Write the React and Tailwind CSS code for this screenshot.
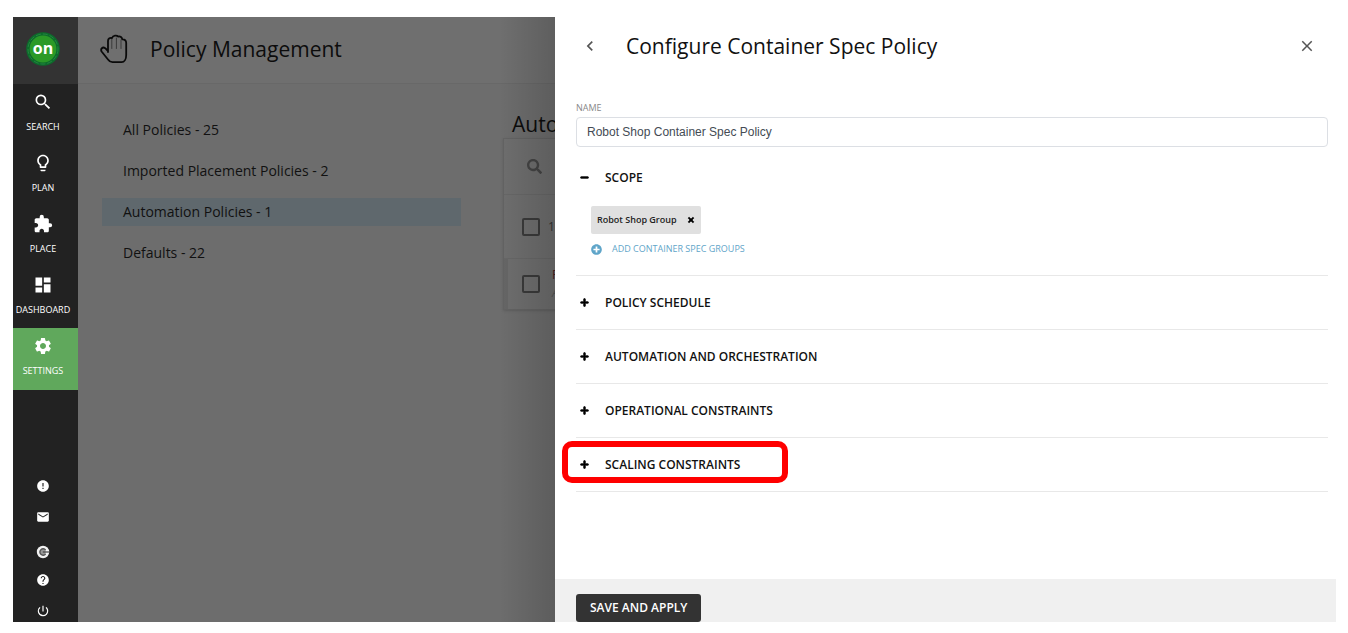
import { useState } from "react";
import { FaMinus, FaPlus, FaPlusCircle, FaSearch, FaTimes } from "react-icons/fa";
import {
  MdChevronLeft,
  MdClose,
  MdDashboard,
  MdEmail,
  MdError,
  MdExtension,
  MdHelp,
  MdLightbulbOutline,
  MdPowerSettingsNew,
  MdSearch,
  MdSettings,
} from "react-icons/md";

const navItems = [
  { label: "SEARCH", Icon: MdSearch },
  { label: "PLAN", Icon: MdLightbulbOutline },
  { label: "PLACE", Icon: MdExtension },
  { label: "DASHBOARD", Icon: MdDashboard },
  { label: "SETTINGS", Icon: MdSettings, active: true },
];

const categories = [
  { label: "All Policies - 25" },
  { label: "Imported Placement Policies - 2" },
  { label: "Automation Policies - 1", active: true },
  { label: "Defaults - 22" },
];

function Logo() {
  return (
    <svg viewBox="0 0 34 34" className="size-[34px]" role="img" aria-label="on">
      <circle cx="17" cy="17" r="16.8" fill="#0d6b2b" />
      <circle cx="17" cy="17" r="15" fill="none" stroke="#2a8a45" strokeWidth="0.8" strokeDasharray="5 2" />
      <circle cx="17" cy="17" r="13.4" fill="#2b9a27" />
      <text x="17" y="21.5" textAnchor="middle" fontSize="16" fontWeight="700" fill="#fff" fontFamily="Open Sans, sans-serif">
        on
      </text>
    </svg>
  );
}

function HandIcon() {
  return (
    <svg viewBox="0 0 28 30" className="h-[30px] w-7" fill="none" stroke="#0a0a0a" strokeWidth="1.8" strokeLinecap="round" strokeLinejoin="round" aria-hidden="true">
      <path d="M11.8 5V14.5M16.4 4V14.5M21 6V14.5" stroke="#3a3a3a" strokeWidth="1" />
      <path d="M8 18V7C8 4.5 9.5 3.6 12 4C13 1.2 17 1 18 2.6C20.5 2 22 3.4 22.3 5.4C24.8 5.2 26.2 6.6 26.2 9V21C26.2 25 24.5 28.2 21.5 28.2H12.5C10 28.2 9 27 8 25.5L1.6 17.5C.2 15 2.6 12.4 5.2 14.2L8 17" />
    </svg>
  );
}

function GlobeG() {
  return (
    <svg viewBox="0 0 14 14" className="size-3.5" aria-hidden="true">
      <circle cx="7" cy="7" r="6.2" fill="#f2f2f2" />
      <path d="M9.6 5A3.2 3.2 0 1 0 9.6 9" fill="#999" stroke="#555" strokeWidth="1.4" />
      <path d="M6.8 7H13.4" stroke="#444" strokeWidth="1.2" />
    </svg>
  );
}

function NavBar() {
  return (
    <nav className="flex w-[65px] shrink-0 flex-col bg-[#222] text-white">
      <a href="#home" className="flex h-[67px] shrink-0 items-center justify-center bg-[#333] pr-[5px] pb-[3px]">
        <Logo />
      </a>
      {navItems.map(({ label, Icon, active }) => (
        <a
          key={label}
          href={"#" + label.toLowerCase()}
          className={
            active
              ? "flex h-[62px] shrink-0 flex-col items-center gap-2 bg-[#60a85c] pt-2 pr-[5px]"
              : "flex h-[61px] shrink-0 flex-col items-center gap-2 pt-2 pr-[5px]"
          }
        >
          <Icon className="size-5" />
          <span className="text-[9px] leading-[14px]">{label}</span>
        </a>
      ))}
      <div className="mt-auto flex flex-col items-center gap-[21px] pr-[5px] pb-1">
        <div className="flex flex-col gap-[17px]">
          <button type="button" aria-label="Alerts"><MdError className="size-3.5" /></button>
          <button type="button" aria-label="Messages"><MdEmail className="size-3.5" /></button>
        </div>
        <div className="flex flex-col gap-[17px]">
          <div className="flex flex-col gap-3.5">
            <button type="button" aria-label="Community"><GlobeG /></button>
            <button type="button" aria-label="Help"><MdHelp className="size-3.5" /></button>
          </div>
          <button type="button" aria-label="Log out"><MdPowerSettingsNew className="size-3.5" /></button>
        </div>
      </div>
    </nav>
  );
}

function Checkbox({ label }) {
  return (
    <input
      type="checkbox"
      aria-label={label}
      className="size-[18px] shrink-0 appearance-none rounded-xs border-2 border-[#3a3a3a]"
    />
  );
}

function PolicyPage() {
  return (
    <main className="relative w-[477px] shrink-0 overflow-hidden bg-[#6d6d6d]">
      <header className="flex h-[67px] items-center gap-[22px] border-b border-[#686868] bg-[#6f6f6f] pb-0.5 pl-[22px]">
        <HandIcon />
        <h1 className="text-[21px] leading-7 text-[#0c0c0c]">Policy Management</h1>
      </header>
      <div className="flex">
        <ul className="ml-6 mt-8 flex w-[359px] shrink-0 flex-col gap-[13px]">
          {categories.map(({ label, active }) => (
            <li key={label}>
              <a
                href="#policies"
                className={
                  active
                    ? "flex h-7 items-center bg-[#5f686d] pl-[21px] text-sm text-[#111]"
                    : "flex h-7 items-center pl-[21px] text-sm text-[#111]"
                }
              >
                {label}
              </a>
            </li>
          ))}
        </ul>
        <section className="ml-[42px] mt-[26px] w-[600px] shrink-0">
          <h2 className="pl-[9px] text-[21px] leading-7 text-[#0c0c0c]">Automation</h2>
          <div className="border border-[#636363] bg-[#6e6e6e] shadow">
            <div className="flex h-14 items-center border-b border-[#676767] pl-[23px]">
              <FaSearch className="size-[15px] text-[#444]" />
            </div>
            <div className="flex h-16 items-center gap-2 border-b border-[#676767] pl-[18px] text-xs text-[#333]">
              <Checkbox label="Select all" />
              <span>1</span>
            </div>
            <div className="flex h-[50px] items-center gap-3 border-l-4 border-[#666] pl-[14px]">
              <Checkbox label="Select policy" />
              <div className="text-xs leading-[18px]">
                <p className="text-[#4a2020]">R</p>
                <p className="italic text-[#555]">A</p>
              </div>
            </div>
          </div>
        </section>
      </div>
      <div className="pointer-events-none absolute inset-y-0 right-0 w-14 bg-linear-to-r from-transparent to-black/15" />
    </main>
  );
}

function Section({ title, open, onToggle, highlighted, children }) {
  const Icon = open ? FaMinus : FaPlus;
  return (
    <section className="relative border-b border-[#e8e8e8]">
      <button type="button" onClick={onToggle} aria-expanded={open} className="flex h-[53px] w-full items-center gap-4 pl-1 text-left">
        <Icon className="size-[9px] stroke-black stroke-[40px] text-black" />
        <span className="text-[12px] font-semibold text-[#111]">{title}</span>
      </button>
      {open && children}
      {highlighted && (
        <div className="pointer-events-none absolute -left-3.5 top-[3px] h-[42px] w-[226px] rounded-[10px] border-6 border-[#ff0000]" />
      )}
    </section>
  );
}

function Drawer() {
  const [name, setName] = useState("Robot Shop Container Spec Policy");
  const [open, setOpen] = useState("SCOPE");
  const toggle = (title) => setOpen(open === title ? "" : title);
  return (
    <aside className="flex min-w-0 flex-1 flex-col bg-white">
      <header className="flex h-[58px] shrink-0 items-center pl-[25px] pr-5">
        <button type="button" aria-label="Back" className="text-[#555]">
          <MdChevronLeft className="size-5" />
        </button>
        <h2 className="ml-[26px] flex-1 text-[21px] leading-7 text-[#111]">Configure Container Spec Policy</h2>
        <button type="button" aria-label="Close" className="text-[#555]">
          <MdClose className="size-[18px]" />
        </button>
      </header>
      <div className="flex-1 pl-[21px] pr-2 pt-[26px]">
        <label htmlFor="policy-name" className="block text-[9px] leading-[14px] text-[#888]">NAME</label>
        <input
          id="policy-name"
          value={name}
          onChange={(event) => setName(event.target.value)}
          className="mt-0.5 mb-1 block h-[30px] w-full rounded-sm border border-[#dcdfe4] px-2.5 font-['Liberation_Sans',sans-serif] text-[12px] text-[#444b54]"
        />
        <Section title="SCOPE" open={open === "SCOPE"} onToggle={() => toggle("SCOPE")}>
          <div className="flex flex-col items-start gap-2 pt-0.5 pb-[19px] pl-[15px]">
            <div className="flex h-7 items-center gap-2.5 rounded-xs bg-[#e0e0e0] px-1.5 text-[9px] font-semibold text-[#222]">
              Robot Shop Group
              <button type="button" aria-label="Remove Robot Shop Group">
                <FaTimes className="size-2 stroke-black stroke-[40px] text-black" />
              </button>
            </div>
            <button type="button" className="flex items-center gap-2.5 text-[9px] leading-[14px] font-medium text-[#5fa5c9]">
              <FaPlusCircle className="size-[11px]" />
              ADD CONTAINER SPEC GROUPS
            </button>
          </div>
        </Section>
        {["POLICY SCHEDULE", "AUTOMATION AND ORCHESTRATION", "OPERATIONAL CONSTRAINTS", "SCALING CONSTRAINTS"].map((title) => (
          <Section
            key={title}
            title={title}
            open={open === title}
            onToggle={() => toggle(title)}
            highlighted={title === "SCALING CONSTRAINTS"}
          />
        ))}
      </div>
      <footer className="shrink-0 bg-[#f0f0f0] pl-[21px] pt-[15px]">
        <button type="button" className="h-7 rounded-[3px] bg-[#333] px-3.5 text-[12px] font-semibold text-white">
          SAVE AND APPLY
        </button>
      </footer>
    </aside>
  );
}

export default function App() {
  return (
    <div className="flex h-screen bg-white pt-[17px] pr-3 pb-[11px] pl-[13px] font-['Open_Sans','Noto_Sans',sans-serif]">
      <NavBar />
      <PolicyPage />
      <Drawer />
    </div>
  );
}
